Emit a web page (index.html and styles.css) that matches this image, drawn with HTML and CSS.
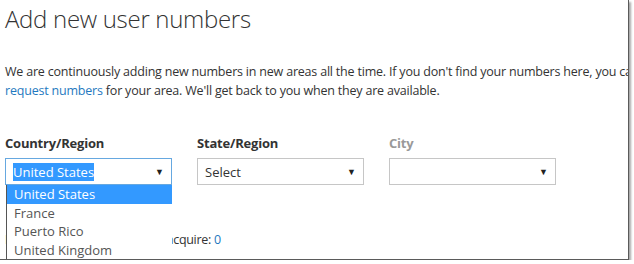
FILE: index.html
```html
<!DOCTYPE html>
<html>
<head>
  <link rel="stylesheet" href="styles.css">
</head>
<body>
  <div class="frame">
    <h1 class="title">Add new user numbers</h1>

    <p class="intro">We are continuously adding new numbers in new areas all the time. If you don't find your numbers here, you can <a href="#">request numbers</a> for your area. We'll get back to you when they are available.</p>

    <div class="location-row">
      <div class="field">
        <div class="field-label">Country/Region</div>
        <div class="select-box focused">
          <span class="select-value"><span class="selected-text">United States</span></span>
          <span class="arrow">&#9660;</span>
        </div>
        <ul class="option-list">
          <li class="option active">United States</li>
          <li class="option">France</li>
          <li class="option">Puerto Rico</li>
          <li class="option">United Kingdom</li>
        </ul>
      </div>
      <div class="field">
        <div class="field-label">State/Region</div>
        <div class="select-box">
          <span class="select-value">Select</span>
          <span class="arrow">&#9660;</span>
        </div>
      </div>
      <div class="field disabled">
        <div class="field-label">City</div>
        <div class="select-box">
          <span class="select-value"></span>
          <span class="arrow">&#9660;</span>
        </div>
      </div>
    </div>

    <p class="count">Remaining numbers you can acquire: <a href="#">0</a></p>
  </div>
</body>
</html>
```

FILE: styles.css
```css
body {
  margin: 0;
  padding: 0;
  background: #fff;
  overflow: hidden;
}

.frame {
  position: relative;
  width: 623px;
  height: 259px;
  padding-left: 5px;
  overflow: hidden;
  background: #fff;
  border-right: 1px solid #5a5a5a;
  border-bottom: 1px solid #5a5a5a;
  box-shadow: 2px 2px 2px rgba(0, 0, 0, 0.35);
  font-family: "Open Sans", sans-serif;
  color: #333;
}

.title {
  margin: 0;
  padding-top: 4px;
  font-size: 24px;
  font-weight: 300;
  line-height: 30px;
  letter-spacing: -0.3px;
  color: #333;
}

.intro {
  width: 660px;
  margin: 28px 0 0;
  font-size: 12.5px;
  line-height: 19px;
  letter-spacing: -0.2px;
}

.intro a,
.count a {
  color: #1f79c0;
  text-decoration: none;
}

.location-row {
  display: flex;
  gap: 25px;
  margin-top: 34px;
}

.field {
  position: relative;
  width: 167px;
}

.field-label {
  font-size: 13px;
  font-weight: 700;
  line-height: 18px;
  margin-bottom: 6px;
  letter-spacing: -0.2px;
}

.disabled .field-label {
  color: #999;
}

.select-box {
  display: flex;
  align-items: center;
  justify-content: space-between;
  box-sizing: border-box;
  height: 27px;
  padding: 0 7px 0 7px;
  border: 1px solid #c6c6c6;
  font-size: 13px;
}

.select-box.focused {
  border-color: #66a8e0;
}

.selected-text {
  background: #3399ff;
  color: #fff;
}

.arrow {
  font-size: 9px;
  color: #222;
}

.option-list {
  position: absolute;
  left: 1px;
  top: 51px;
  width: 165px;
  margin: 0;
  padding: 0;
  list-style: none;
  background: #fff;
  border-left: 1px solid #555;
  z-index: 2;
}

.option {
  height: 18.5px;
  line-height: 18px;
  padding-left: 7px;
  font-size: 13px;
  color: #555;
}

.option.active {
  background: #3399ff;
  color: #fff;
}

.count {
  margin: 46px 0 0;
  font-size: 12.5px;
  letter-spacing: -0.3px;
}
```
